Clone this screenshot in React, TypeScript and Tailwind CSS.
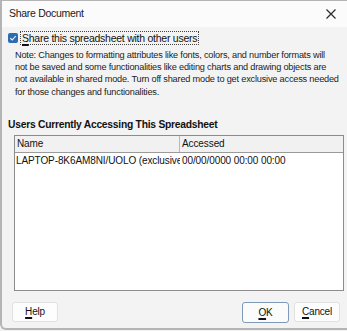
import React from "react";

function Mnemonic({ text, idx }: { text: string; idx: number }) {
  return (
    <>
      {text.slice(0, idx)}
      <span className="underline decoration-[1.5px] underline-offset-[2px]">{text[idx]}</span>
      {text.slice(idx + 1)}
    </>
  );
}

const noteLines = [
  "Note: Changes to formatting attributes like fonts, colors, and number formats will",
  "not be saved and some functionalities like editing charts and drawing objects are",
  "not available in shared mode. Turn off shared mode to get exclusive access needed",
  "for those changes and functionalities.",
];

export default function App() {
  return (
    <div
      className="w-[347px] h-[331px] bg-[#f3f3f3] overflow-hidden"
      style={{ fontFamily: '"Liberation Sans", Arial, sans-serif' }}
    >
      <div className="h-[330px] border-l-2 border-t border-b-2 border-[#b4b4b4] rounded-bl-md flex flex-col">
        {/* title bar */}
        <div className="h-[26px] bg-[#fbfbfb] flex items-center justify-between pl-[7px] pr-[11px] text-[10.5px] tracking-[-0.3px] text-[#1a1a1a]">
          <span>Share Document</span>
          <svg width="10" height="10" viewBox="0 0 10 10">
            <path d="M0.5 0.5 L9.5 9.5 M9.5 0.5 L0.5 9.5" stroke="#2a2a2a" strokeWidth="1.2" />
          </svg>
        </div>

        <div className="flex items-center mt-[4px] h-[14px] ml-[6px]">
          <span className="w-[10px] h-[10px] rounded-[2px] bg-[#2b6cb3] flex items-center justify-center">
            <svg width="8" height="8" viewBox="0 0 8 8">
              <path d="M1.3 4.2 L3.2 6 L6.8 2" stroke="#fff" strokeWidth="1.1" fill="none" />
            </svg>
          </span>
          <span className="ml-[2px] px-[1px] h-[14px] border border-dotted border-[#444] text-[10.5px] tracking-[-0.25px] leading-[12px] text-[#111] whitespace-nowrap">
            <Mnemonic text="Share this spreadsheet with other users" idx={0} />
          </span>
        </div>

        <div className="ml-[13px] mt-[4px] text-[9.2px] tracking-[-0.2px] leading-[12.2px] text-[#1c1c1c]">
          {noteLines.map((l) => (
            <div key={l} className="whitespace-nowrap">
              {l}
            </div>
          ))}
        </div>

        <div className="mt-[20px] ml-[6px] text-[10.3px] tracking-[-0.25px] font-bold text-[#111] leading-[13px] whitespace-nowrap">
          Users Currently Accessing This Spreadsheet
        </div>

        <div className="mt-[4px] ml-[12px] w-[330px] h-[156px] bg-white border border-[#8c8c8c] text-[10px] tracking-[-0.1px] text-[#111]">
          <div className="flex h-[17px] bg-[#f1f1f1] border-b border-[#9a9a9a]">
            <div className="w-[165px] border-r border-[#b8b8b8] pl-[2px] leading-[16px]">Name</div>
            <div className="pl-[2px] leading-[16px]">Accessed</div>
          </div>
          <div className="flex h-[16px] items-center">
            <div className="w-[165px] pl-[1px] whitespace-nowrap overflow-hidden">LAPTOP-8K6AM8NI/UOLO (exclusive)</div>
            <div className="pl-[2px] whitespace-nowrap">00/00/0000 00:00 00:00</div>
          </div>
        </div>

        <div className="mt-[11px] flex items-start text-[10px] tracking-[-0.2px] text-[#111]">
          <button className="ml-[10px] w-[46px] h-[20px] bg-[#fdfdfd] border border-[#e1e1e1] rounded-[3px]">
            <Mnemonic text="Help" idx={0} />
          </button>
          <button className="ml-auto w-[47px] h-[21px] bg-[#fbfbfb] border border-[#7f9ab8] rounded-[3px]">
            <Mnemonic text="OK" idx={0} />
          </button>
          <button className="ml-[5px] mr-[7px] w-[46px] h-[20px] bg-[#fdfdfd] border border-[#e1e1e1] rounded-[3px]">
            <Mnemonic text="Cancel" idx={0} />
          </button>
        </div>
      </div>
    </div>
  );
}
